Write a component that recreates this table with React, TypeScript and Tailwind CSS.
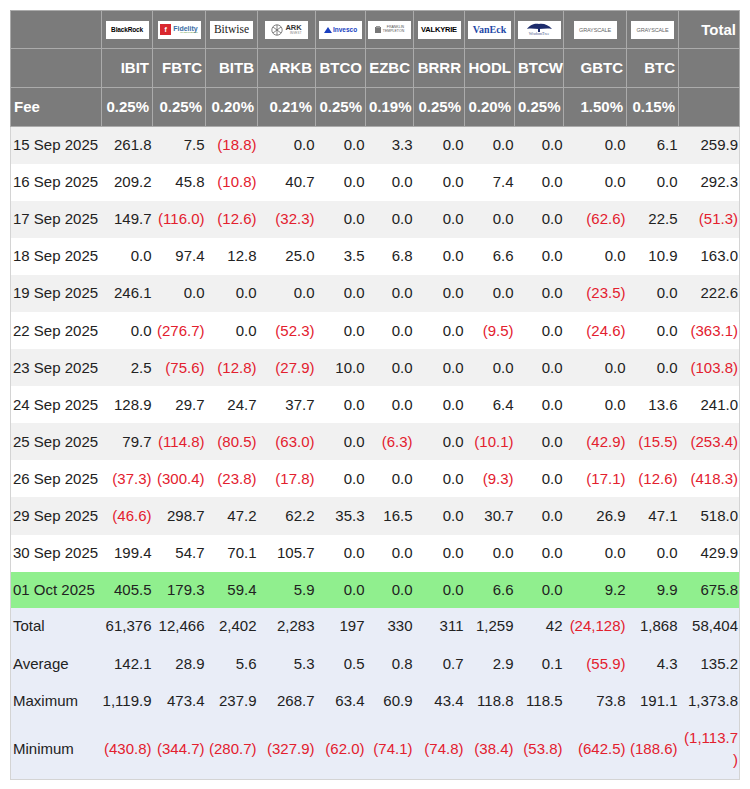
const cols = [91, 51, 53, 52, 58, 50, 48, 51, 50, 49, 63, 52, 61];

const tickers = ["IBIT", "FBTC", "BITB", "ARKB", "BTCO", "EZBC", "BRRR", "HODL", "BTCW", "GBTC", "BTC"];
const fees = ["0.25%", "0.25%", "0.20%", "0.21%", "0.25%", "0.19%", "0.25%", "0.20%", "0.25%", "1.50%", "0.15%"];

const days: [string, string[]][] = [
  ["15 Sep 2025", ["261.8", "7.5", "(18.8)", "0.0", "0.0", "3.3", "0.0", "0.0", "0.0", "0.0", "6.1", "259.9"]],
  ["16 Sep 2025", ["209.2", "45.8", "(10.8)", "40.7", "0.0", "0.0", "0.0", "7.4", "0.0", "0.0", "0.0", "292.3"]],
  ["17 Sep 2025", ["149.7", "(116.0)", "(12.6)", "(32.3)", "0.0", "0.0", "0.0", "0.0", "0.0", "(62.6)", "22.5", "(51.3)"]],
  ["18 Sep 2025", ["0.0", "97.4", "12.8", "25.0", "3.5", "6.8", "0.0", "6.6", "0.0", "0.0", "10.9", "163.0"]],
  ["19 Sep 2025", ["246.1", "0.0", "0.0", "0.0", "0.0", "0.0", "0.0", "0.0", "0.0", "(23.5)", "0.0", "222.6"]],
  ["22 Sep 2025", ["0.0", "(276.7)", "0.0", "(52.3)", "0.0", "0.0", "0.0", "(9.5)", "0.0", "(24.6)", "0.0", "(363.1)"]],
  ["23 Sep 2025", ["2.5", "(75.6)", "(12.8)", "(27.9)", "10.0", "0.0", "0.0", "0.0", "0.0", "0.0", "0.0", "(103.8)"]],
  ["24 Sep 2025", ["128.9", "29.7", "24.7", "37.7", "0.0", "0.0", "0.0", "6.4", "0.0", "0.0", "13.6", "241.0"]],
  ["25 Sep 2025", ["79.7", "(114.8)", "(80.5)", "(63.0)", "0.0", "(6.3)", "0.0", "(10.1)", "0.0", "(42.9)", "(15.5)", "(253.4)"]],
  ["26 Sep 2025", ["(37.3)", "(300.4)", "(23.8)", "(17.8)", "0.0", "0.0", "0.0", "(9.3)", "0.0", "(17.1)", "(12.6)", "(418.3)"]],
  ["29 Sep 2025", ["(46.6)", "298.7", "47.2", "62.2", "35.3", "16.5", "0.0", "30.7", "0.0", "26.9", "47.1", "518.0"]],
  ["30 Sep 2025", ["199.4", "54.7", "70.1", "105.7", "0.0", "0.0", "0.0", "0.0", "0.0", "0.0", "0.0", "429.9"]],
  ["01 Oct 2025", ["405.5", "179.3", "59.4", "5.9", "0.0", "0.0", "0.0", "6.6", "0.0", "9.2", "9.9", "675.8"]],
];

const summary: [string, string[]][] = [
  ["Total", ["61,376", "12,466", "2,402", "2,283", "197", "330", "311", "1,259", "42", "(24,128)", "1,868", "58,404"]],
  ["Average", ["142.1", "28.9", "5.6", "5.3", "0.5", "0.8", "0.7", "2.9", "0.1", "(55.9)", "4.3", "135.2"]],
  ["Maximum", ["1,119.9", "473.4", "237.9", "268.7", "63.4", "60.9", "43.4", "118.8", "118.5", "73.8", "191.1", "1,373.8"]],
  ["Minimum", ["(430.8)", "(344.7)", "(280.7)", "(327.9)", "(62.0)", "(74.1)", "(74.8)", "(38.4)", "(53.8)", "(642.5)", "(188.6)", "(1,113.7)"]],
];

function LogoBox({ children }: { children: React.ReactNode }) {
  return (
    <div className="mx-auto flex h-[18px] w-[43px] items-center justify-center overflow-hidden bg-white font-normal">
      {children}
    </div>
  );
}

const logos = [
  <LogoBox key="blackrock">
    <span className="text-[6.5px] font-bold tracking-tight text-black">BlackRock</span>
  </LogoBox>,
  <LogoBox key="fidelity">
    <div className="flex items-center gap-[2px]">
      <span className="flex h-[11px] w-[11px] items-center justify-center bg-[#d9272e] text-[7px] font-bold leading-none text-white">f</span>
      <div className="flex flex-col leading-none">
        <span className="text-[7px] font-bold text-[#3a6ea5]">Fidelity</span>
        <span className="text-[2.5px] text-[#6a9a4a]">INVESTMENTS</span>
      </div>
    </div>
  </LogoBox>,
  <LogoBox key="bitwise">
    <span className="font-['Liberation_Serif',serif] text-[11.5px] leading-none text-[#222]">Bitwise</span>
  </LogoBox>,
  <LogoBox key="ark">
    <div className="flex items-center gap-[2px]">
      <svg width="12" height="12" viewBox="0 0 12 12" fill="none" stroke="#666" strokeWidth="0.8">
        <circle cx="6" cy="6" r="5.2" />
        <path d="M6 0.8V11.2M2 3l8 6M10 3L2 9" />
      </svg>
      <div className="flex flex-col leading-none">
        <span className="text-[7.5px] font-bold text-[#333]">ARK</span>
        <span className="text-[3px] tracking-wider text-[#777]">INVEST</span>
      </div>
    </div>
  </LogoBox>,
  <LogoBox key="invesco">
    <div className="flex items-center gap-[1px]">
      <svg width="8" height="6" viewBox="0 0 8 6">
        <path d="M0 6L4 0L8 6Z" fill="#1a3fbf" />
      </svg>
      <span className="text-[6.5px] font-bold text-[#1a3fbf]">Invesco</span>
    </div>
  </LogoBox>,
  <LogoBox key="franklin">
    <div className="flex items-center gap-[2px]">
      <svg width="6" height="7" viewBox="0 0 6 7">
        <rect x="0" y="1" width="6" height="6" fill="#777" />
        <rect x="1" y="0" width="4" height="2" fill="#999" />
      </svg>
      <div className="flex flex-col leading-none text-[#555]">
        <span className="text-[3.5px]">FRANKLIN</span>
        <span className="text-[3.5px]">TEMPLETON</span>
      </div>
    </div>
  </LogoBox>,
  <LogoBox key="valkyrie">
    <span className="text-[7.5px] font-bold tracking-tight text-black">VALKYRIE</span>
  </LogoBox>,
  <LogoBox key="vaneck">
    <span className="font-['Liberation_Serif',serif] text-[10px] font-bold leading-none text-[#1f4aa8]">VanEck</span>
  </LogoBox>,
  <LogoBox key="wisdomtree">
    <div className="flex flex-col items-center leading-none">
      <svg width="28" height="9" viewBox="0 0 28 9">
        <path d="M2 6C5 1 11 0 14 1C18 0 24 2 27 6C22 5 18 6 14 6C10 6 6 5 2 6Z" fill="#1c2b6b" />
        <rect x="13" y="5" width="2" height="4" fill="#1c2b6b" />
      </svg>
      <span className="font-['Liberation_Serif',serif] text-[4px] text-[#4a5a8a]">WisdomTree</span>
    </div>
  </LogoBox>,
  <LogoBox key="grayscale1">
    <span className="text-[5.5px] tracking-tight text-[#666]">GRAYSCALE</span>
  </LogoBox>,
  <LogoBox key="grayscale2">
    <span className="text-[5.5px] tracking-tight text-[#666]">GRAYSCALE</span>
  </LogoBox>,
];

const th = "border border-[#ababab] bg-[#7b7b7b] px-[3px] text-right font-bold text-white";

function Num({ v, wrap }: { v: string; wrap?: boolean }) {
  const neg = v.startsWith("(");
  return (
    <td
      className={`px-px text-right ${neg ? "text-[#e3202e]" : "text-[#222]"} ${
        wrap ? "[overflow-wrap:anywhere]" : "whitespace-nowrap"
      }`}
    >
      {v}
    </td>
  );
}

export default function App() {
  return (
    <div className="min-h-[789px] bg-white p-[10px] font-['Liberation_Sans',Arial,sans-serif] text-[15px] leading-[22px]">
      <table className="w-[730px] table-fixed border-collapse border border-[#d4d4d4]">
        <colgroup>
          {cols.map((w, i) => (
            <col key={i} style={{ width: w }} />
          ))}
        </colgroup>
        <thead>
          <tr className="h-[38px]">
            <th className={th}></th>
            {logos.map((l, i) => (
              <th key={i} className={`${th} !px-0`}>
                {l}
              </th>
            ))}
            <th className={th}>Total</th>
          </tr>
          <tr className="h-[39px]">
            <th className={th}></th>
            {tickers.map((t) => (
              <th key={t} className={th}>
                {t}
              </th>
            ))}
            <th className={th}></th>
          </tr>
          <tr className="h-[39px]">
            <th className={`${th} !text-left`}>Fee</th>
            {fees.map((f, i) => (
              <th key={i} className={th}>
                {f}
              </th>
            ))}
            <th className={th}></th>
          </tr>
        </thead>
        <tbody>
          {days.map(([d, vals], i) => {
            const last = i === days.length - 1;
            const bg = last ? "bg-[#90ef8e]" : i % 2 === 0 ? "bg-[#f1f1f1]" : "bg-white";
            return (
              <tr key={d} className={`${bg} ${last ? "h-[36px]" : "h-[37.1px]"}`}>
                <td className="whitespace-nowrap px-[2px] text-left text-[#222]">{d}</td>
                {vals.map((v, j) => (
                  <Num key={j} v={v} />
                ))}
              </tr>
            );
          })}
          {summary.map(([label, vals], i) => (
            <tr key={label} className={`bg-[#e9edf7] ${i === 3 ? "h-[59px]" : "h-[37.5px]"}`}>
              <td className="whitespace-nowrap px-[2px] text-left text-[#222]">{label}</td>
              {vals.map((v, j) => (
                <Num key={j} v={v} wrap={i === 3 && j === vals.length - 1} />
              ))}
            </tr>
          ))}
        </tbody>
      </table>
    </div>
  );
}
